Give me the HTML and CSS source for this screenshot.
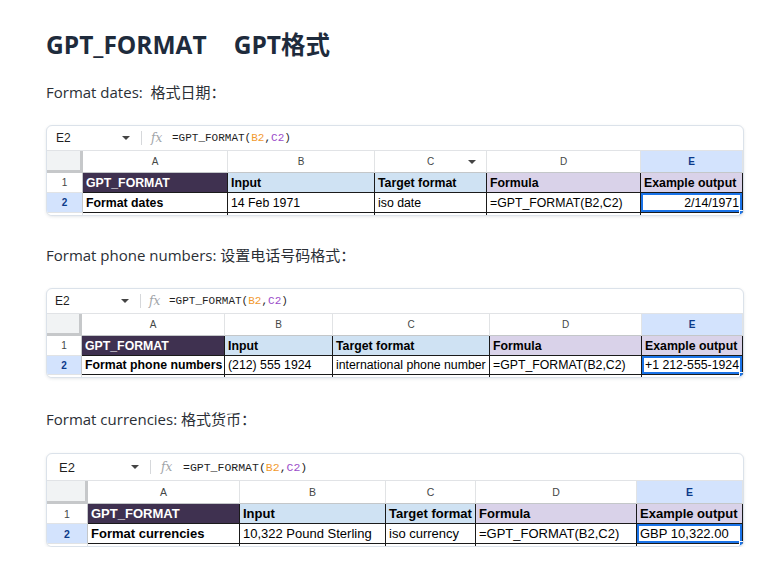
FILE: index.html
```html
<!DOCTYPE html>
<html lang="zh-CN">
<head>
<meta charset="utf-8">
<title>GPT_FORMAT</title>
<link rel="stylesheet" href="styles.css">
</head>
<body>
<main class="page">
  <h1 class="title"><span>GPT_FORMAT</span><span class="title-cn">GPT格式</span></h1>

  <p class="lead">Format dates:&nbsp; 格式日期：</p>
  <section class="sheet s1">
    <div class="toolbar">
      <span class="ref">E2</span>
      <span class="caret"></span>
      <span class="sep"></span>
      <span class="fx">fx</span>
      <span class="formula">=GPT_FORMAT(<span class="f-b">B2</span>,<span class="f-c">C2</span>)</span>
    </div>
    <div class="grid">
      <div class="corner"></div>
      <div class="ch">A</div>
      <div class="ch">B</div>
      <div class="ch ch-filter">C<span class="filter"></span></div>
      <div class="ch">D</div>
      <div class="ch ch-sel">E</div>

      <div class="rh">1</div>
      <div class="c h-dark">GPT_FORMAT</div>
      <div class="c h-blue">Input</div>
      <div class="c h-blue">Target format</div>
      <div class="c h-lav">Formula</div>
      <div class="c h-lav">Example output</div>

      <div class="rh rh-sel">2</div>
      <div class="c d b">Format dates</div>
      <div class="c d">14 Feb 1971</div>
      <div class="c d">iso date</div>
      <div class="c d">=GPT_FORMAT(B2,C2)</div>
      <div class="c d sel right">2/14/1971<span class="handle"></span></div>

      <div class="tail"></div><div class="tail t-d"></div><div class="tail t-d"></div><div class="tail t-d"></div><div class="tail t-d"></div><div class="tail t-d"></div>
    </div>
  </section>

  <p class="lead">Format phone numbers: 设置电话号码格式：</p>
  <section class="sheet s2">
    <div class="toolbar">
      <span class="ref">E2</span>
      <span class="caret"></span>
      <span class="sep"></span>
      <span class="fx">fx</span>
      <span class="formula">=GPT_FORMAT(<span class="f-b">B2</span>,<span class="f-c">C2</span>)</span>
    </div>
    <div class="grid">
      <div class="corner"></div>
      <div class="ch">A</div>
      <div class="ch">B</div>
      <div class="ch">C</div>
      <div class="ch">D</div>
      <div class="ch ch-sel">E</div>

      <div class="rh">1</div>
      <div class="c h-dark">GPT_FORMAT</div>
      <div class="c h-blue">Input</div>
      <div class="c h-blue">Target format</div>
      <div class="c h-lav">Formula</div>
      <div class="c h-lav">Example output</div>

      <div class="rh rh-sel">2</div>
      <div class="c d b">Format phone numbers</div>
      <div class="c d">(212) 555 1924</div>
      <div class="c d">international phone number</div>
      <div class="c d">=GPT_FORMAT(B2,C2)</div>
      <div class="c d sel">+1 212-555-1924<span class="handle"></span></div>

      <div class="tail"></div><div class="tail t-d"></div><div class="tail t-d"></div><div class="tail t-d"></div><div class="tail t-d"></div><div class="tail t-d"></div>
    </div>
  </section>

  <p class="lead lead-3">Format currencies: 格式货币：</p>
  <section class="sheet s3">
    <div class="toolbar">
      <span class="ref">E2</span>
      <span class="caret"></span>
      <span class="sep"></span>
      <span class="fx">fx</span>
      <span class="formula">=GPT_FORMAT(<span class="f-b">B2</span>,<span class="f-c">C2</span>)</span>
    </div>
    <div class="grid">
      <div class="corner"></div>
      <div class="ch">A</div>
      <div class="ch">B</div>
      <div class="ch">C</div>
      <div class="ch">D</div>
      <div class="ch ch-sel">E</div>

      <div class="rh">1</div>
      <div class="c h-dark">GPT_FORMAT</div>
      <div class="c h-blue">Input</div>
      <div class="c h-blue">Target format</div>
      <div class="c h-lav">Formula</div>
      <div class="c h-lav">Example output</div>

      <div class="rh rh-sel">2</div>
      <div class="c d b">Format currencies</div>
      <div class="c d">10,322 Pound Sterling</div>
      <div class="c d">iso currency</div>
      <div class="c d">=GPT_FORMAT(B2,C2)</div>
      <div class="c d sel">GBP 10,322.00<span class="handle"></span></div>

      <div class="tail"></div><div class="tail t-d"></div><div class="tail t-d"></div><div class="tail t-d"></div><div class="tail t-d"></div><div class="tail t-d"></div>
    </div>
  </section>
</main>
</body>
</html>
```

FILE: styles.css
```css
* { box-sizing: border-box; }

html, body {
  margin: 0;
  padding: 0;
  background: #ffffff;
}

body {
  font-family: "Open Sans", "Noto Sans CJK SC", sans-serif;
  color: #2b2f36;
}

.page {
  padding: 29px 36px 0 46px;
}

.title {
  margin: 0;
  height: 32px;
  line-height: 32px;
  font-size: 24.5px;
  font-weight: 700;
  color: #1e2b3c;
  display: flex;
  gap: 27px;
  font-family: "Open Sans", "Noto Sans CJK SC", sans-serif;
}

.lead {
  margin: 19px 0 0;
  line-height: 24px;
  font-size: 15px;
  color: #2b2f36;
}

.sheet + .lead { margin-top: 27px; }
.sheet + .lead-3 { margin-top: 29px; }

.sheet {
  margin-top: 21px;
  width: 698px;
  border: 1px solid #dbe2ea;
  border-radius: 6px;
  overflow: hidden;
  background: #fff;
  box-shadow: 0 1px 3px rgba(60, 72, 90, 0.12);
  font-family: "Liberation Sans", Arial, sans-serif;
}
.s3 { margin-top: 22px; }

/* toolbar / formula bar */
.toolbar {
  height: 25px;
  display: flex;
  align-items: center;
  border-bottom: 1px solid #e1e3e6;
  font-size: 12px;
  color: #1f1f1f;
}
.ref { margin-left: 9px; width: 66px; }
.caret {
  width: 0; height: 0;
  border-left: 4px solid transparent;
  border-right: 4px solid transparent;
  border-top: 4px solid #444;
  margin-right: 11px;
}
.sep {
  width: 1px;
  height: 14px;
  background: #d6d8db;
  margin-right: 9px;
}
.fx {
  font-family: "DejaVu Serif", "Liberation Serif", serif;
  font-style: italic;
  color: #a0a4a8;
  font-size: 12px;
  width: 21px;
}
.formula {
  font-family: "Liberation Mono", "DejaVu Sans Mono", monospace;
  font-size: 11px;
  color: #1f1f1f;
}
.f-b { color: #f29a2e; }
.f-c { color: #9b4dca; }

/* grid */
.grid {
  display: grid;
  grid-template-rows: 22px 20px 20px 2px;
}
.s1 .grid { grid-template-columns: 36px 145px 147px 112px 154px 102px; }
.s2 .grid { grid-template-columns: 35px 143px 108px 157px 152px 101px; grid-template-rows: 22px 20px 19px 2px; }
.s2 .ref { margin-left: 8px; }
.s2 .sep { margin-right: 8px; }
.s2 .fx { width: 20px; }
.s3 .grid { grid-template-columns: 41px 152px 146px 90px 161px 106px; grid-template-rows: 23px 20px 20px 2px; }
.s3 .toolbar { height: 27px; font-size: 13px; }
.s3 .ref { margin-left: 12px; width: 72px; }
.s3 .sep { margin-right: 10px; }
.s3 .fx { width: 22px; }
.s3 .formula { font-size: 11.5px; }
.s3 .c { font-size: 13px; }
.s3 .ch, .s3 .rh { font-size: 10.5px; }

.corner {
  background: #f1f3f4;
  border-right: 3px solid #c6c8ca;
  border-bottom: 3px solid #c6c8ca;
}
.ch {
  display: flex;
  align-items: center;
  justify-content: center;
  font-size: 10px;
  color: #444746;
  border-right: 1px solid #e1e3e5;
  border-bottom: 1px solid #c4c7c9;
  position: relative;
}
.ch-sel {
  background: #d3e3fd;
  color: #0b3a8a;
  font-weight: 700;
}
.filter {
  position: absolute;
  right: 10px;
  top: 9px;
  width: 0; height: 0;
  border-left: 4px solid transparent;
  border-right: 4px solid transparent;
  border-top: 4px solid #444;
}
.rh {
  display: flex;
  align-items: center;
  justify-content: center;
  font-size: 10px;
  color: #444746;
  border-right: 1px solid #c4c7c9;
  border-bottom: 1px solid #e1e3e5;
}
.rh-sel {
  background: #d3e3fd;
  color: #0b3a8a;
  font-weight: 700;
}

.c {
  display: flex;
  align-items: center;
  padding: 0 3px;
  font-size: 12.3px;
  white-space: nowrap;
  overflow: hidden;
  color: #000;
  border-right: 1px solid #1a1a1a;
  border-bottom: 1px solid #1a1a1a;
  position: relative;
}
.h-dark { background: #3f3150; color: #fff; font-weight: 700; }
.h-blue { background: #cfe2f3; font-weight: 700; }
.h-lav  { background: #d9d2e9; font-weight: 700; }
.d { background: #fff; }
.b { font-weight: 700; }
.right { justify-content: flex-end; }

.sel {
  box-shadow: inset 0 0 0 2px #1a73e8;
  overflow: visible;
}
.handle {
  position: absolute;
  right: -2px;
  bottom: -3px;
  width: 5px;
  height: 5px;
  background: #1a73e8;
  border: 1px solid #fff;
}

.tail { background: #fff; border-right: 1px solid #e1e3e5; }
.tail.t-d { border-right: 1px solid #1a1a1a; }
```
